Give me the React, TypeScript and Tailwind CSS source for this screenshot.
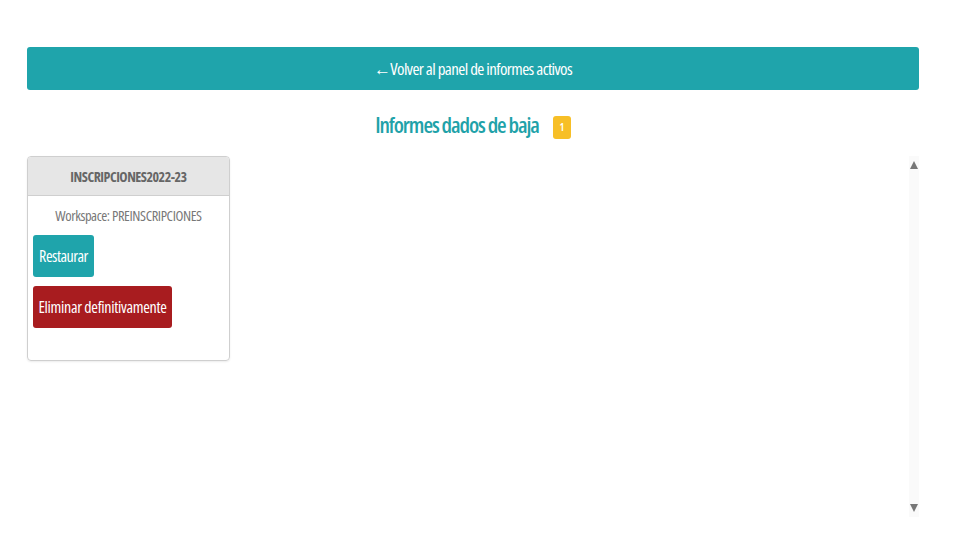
import React from "react";

export default function App() {
  return (
    <div
      className="w-[960px] h-[540px] bg-white overflow-hidden"
      style={{ fontFamily: '"Open Sans", "Liberation Sans", sans-serif', fontStretch: "75%" }}
    >
      <div className="pl-[27px] pt-[47px] w-[919px]">
        <div className="h-[43px] w-[892px] rounded-[3px] bg-[#1fa4ab] flex items-center justify-center text-white text-[17px] tracking-[-0.6px]">
          ←Volver al panel de informes activos
        </div>
        <div className="mt-[18px] flex items-center justify-center gap-[14px]">
          <span className="text-[22px] font-semibold text-[#1fa2a9] tracking-[-1.1px]">Informes dados de baja</span>
          <span className="mt-[6px] h-[23px] w-[18px] rounded-[3px] bg-[#f7bf27] text-white text-[11px] font-semibold flex items-center justify-center">1</span>
        </div>
        <div className="mt-[15px] flex justify-between">
          <div className="w-[203px] h-[205px] border border-[#cfcfcf] rounded-[4px] overflow-hidden shadow-[0_1px_2px_rgba(0,0,0,0.08)]">
            <div className="h-[39px] bg-[#e6e6e6] border-b border-[#cfcfcf] flex items-center justify-center text-[14px] font-bold text-[#666] tracking-[-0.5px]">
              INSCRIPCIONES2022-23
            </div>
            <div className="px-[5px] pt-[9px]">
              <div className="text-center text-[14.5px] text-[#777] tracking-[-0.4px]">Workspace: PREINSCRIPCIONES</div>
              <div className="mt-[8px] h-[42px] w-[61px] rounded-[3px] bg-[#1fa4ab] text-white text-[16px] flex items-center justify-center tracking-[-0.5px]">Restaurar</div>
              <div className="mt-[9px] h-[42px] w-[139px] rounded-[3px] bg-[#a81c1f] text-white text-[16px] flex items-center justify-center tracking-[-0.3px]">Eliminar definitivamente</div>
            </div>
          </div>
          <div className="w-[10px] h-[361px] bg-[#fafafa] flex flex-col items-center justify-between py-[5px]">
            <div className="w-0 h-0 border-l-[4px] border-r-[4px] border-b-[8px] border-l-transparent border-r-transparent border-b-[#777]" />
            <div className="w-0 h-0 border-l-[4px] border-r-[4px] border-t-[8px] border-l-transparent border-r-transparent border-t-[#777]" />
          </div>
        </div>
      </div>
    </div>
  );
}
